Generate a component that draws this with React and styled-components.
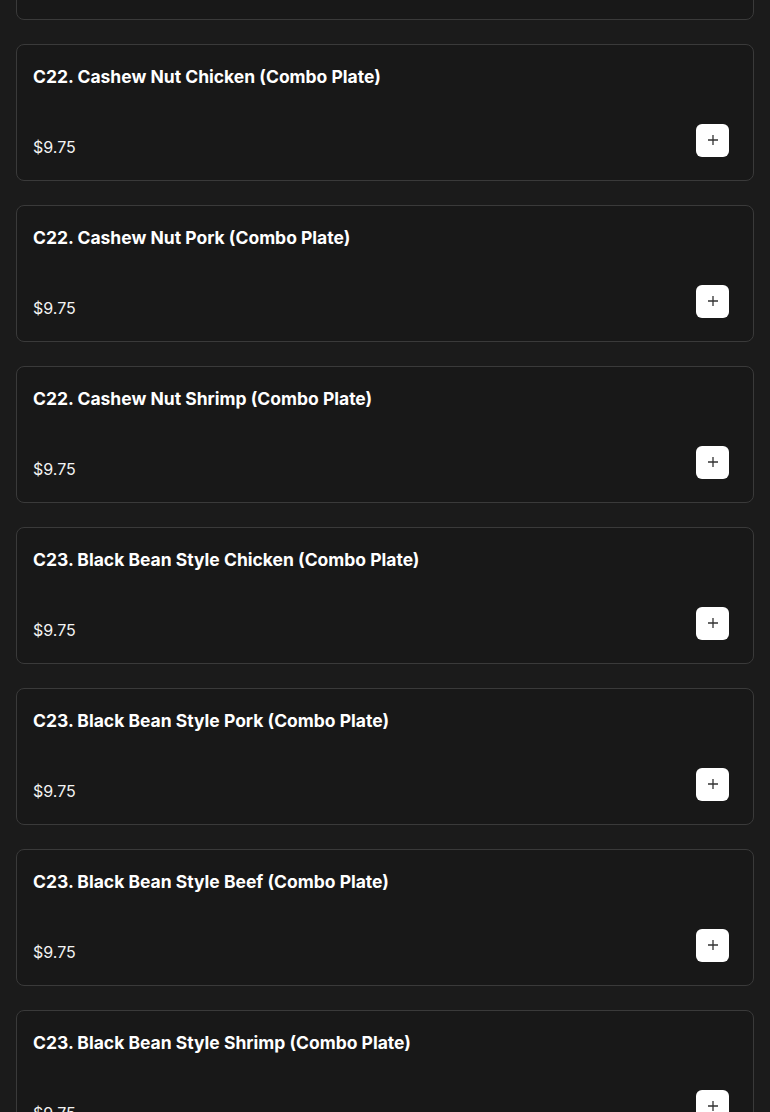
import styled, { createGlobalStyle } from "styled-components";

const GlobalStyle = createGlobalStyle`
    html, body {
        margin: 0;
        padding: 0;
        background: #1b1b1b;
        font-family: "Inter", "Liberation Sans", sans-serif;
        color: #fff;
    }
`;

const items = [
    "C22. Cashew Nut Beef (Combo Plate)",
    "C22. Cashew Nut Chicken (Combo Plate)",
    "C22. Cashew Nut Pork (Combo Plate)",
    "C22. Cashew Nut Shrimp (Combo Plate)",
    "C23. Black Bean Style Chicken (Combo Plate)",
    "C23. Black Bean Style Pork (Combo Plate)",
    "C23. Black Bean Style Beef (Combo Plate)",
    "C23. Black Bean Style Shrimp (Combo Plate)",
];

const List = styled.div`
    display: flex;
    flex-direction: column;
    gap: 24px;
    padding: 0 16px;
    margin-top: -117px;
`;

const Card = styled.div`
    background: #181818;
    border: 1px solid #3a3a3a;
    border-radius: 8px;
    padding: 16px 24px 23px 16px;
    height: 137px;
    box-sizing: border-box;
    display: flex;
    flex-direction: column;
    justify-content: space-between;
`;

const Title = styled.h3`
    margin: 0;
    font-size: 17.5px;
    line-height: 31px;
    font-weight: 700;
    color: #fff;
`;

const Footer = styled.div`
    display: flex;
    justify-content: space-between;
    align-items: center;
`;

const Price = styled.span`
    font-size: 16px;
    margin-top: 14px;
    color: #f2f2f2;
`;

const AddButton = styled.button`
    width: 33px;
    height: 33px;
    border: none;
    border-radius: 6px;
    background: #fff;
    display: flex;
    align-items: center;
    justify-content: center;
    padding: 0;
    cursor: pointer;
`;

const Plus = () => (
    <svg width="12" height="12" viewBox="0 0 12 12">
        <path d="M6 1v10M1 6h10" stroke="#333" strokeWidth="1.3" />
    </svg>
);

export default function App() {
    return <>
        <GlobalStyle />
        <List>
            {items.map((name, i) => (
                <Card key={i}>
                    <Title>{name}</Title>
                    <Footer>
                        <Price>$9.75</Price>
                        <AddButton aria-label="add"><Plus /></AddButton>
                    </Footer>
                </Card>
            ))}
        </List>
    </>
}
